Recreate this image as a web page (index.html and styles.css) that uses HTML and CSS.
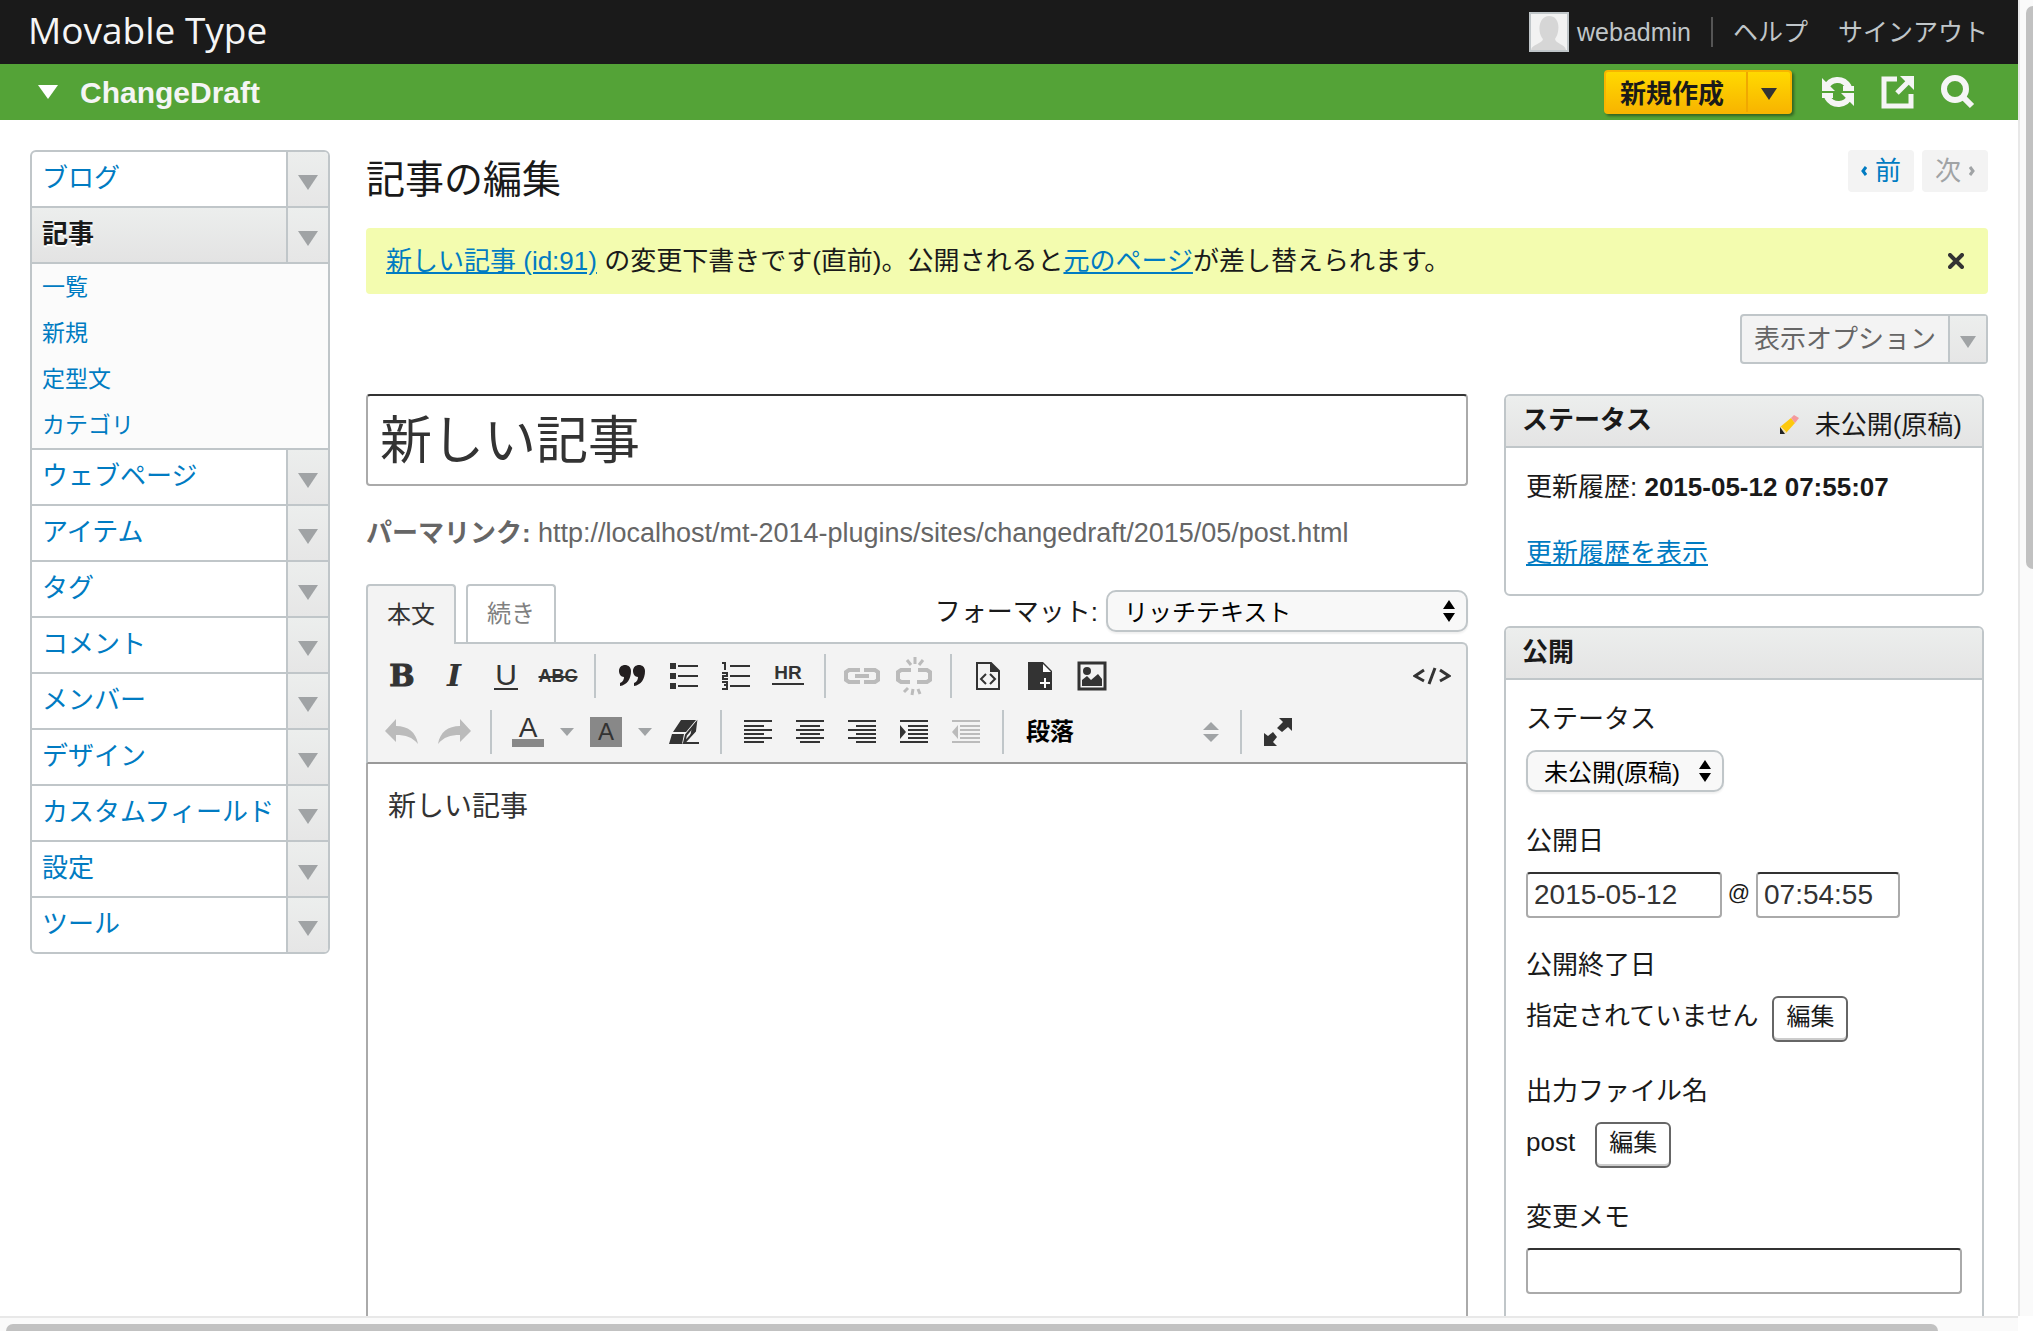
FILE: index.html
```html
<!DOCTYPE html>
<html lang="ja">
  <head>
    <meta charset="UTF-8" />
    <meta name="viewport" content="width=device-width, initial-scale=1.0" />
    <title>記事の編集 - ChangeDraft</title>
    <link rel="stylesheet" href="styles.css">
  </head>
  <body>
    <div class="page">
      <header class="header">
        <a href="#" class="brand">Movable Type</a>
        <div class="user-nav">
          <a href="#" class="user">
            <svg class="avatar" width="40" height="40" viewBox="0 0 40 40">
              <rect x="1" y="1" width="38" height="38" fill="#f2f2f2" stroke="#c0c6c9" stroke-width="2" />
              <path d="M2 38c1-6 11-6 12-11-5-5-6-22 6-23 12 0 11 17 6 23 1 5 10 5 11 11z" fill="#d6d6d6" />
            </svg>
            webadmin
          </a>
          <span class="divider"></span>
          <a href="#">ヘルプ</a>
          <a href="#" class="signout">サインアウト</a>
        </div>
      </header>

      <div class="blog-bar">
        <button type="button" class="blog-select">
          <svg width="20" height="14" viewBox="0 0 20 14"><path d="M0 0h20L10 14z" fill="#fff" /></svg>
          <span>ChangeDraft</span>
        </button>
        <div class="blog-tools">
          <div class="create">
            <button type="button" class="create-main">新規作成</button>
            <button type="button" class="create-more" aria-label="新規作成">
              <svg width="16" height="12" viewBox="0 0 16 12"><path d="M0 0h16L8 12z" fill="#333" /></svg>
            </button>
          </div>
          <a href="#" class="tool">
            <svg width="34" height="34" viewBox="0 0 34 34">
              <path d="M5 13C9 3 22 2 28 12M29 21C25 31 12 32 6 22" fill="none" stroke="#f5f5f5" stroke-width="6" />
              <path d="M1 3v13h13zM33 31V18H20zM22 11h11v5H22zM12 23H1v-5h11z" fill="#f5f5f5" />
            </svg>
          </a>
          <a href="#" class="tool">
            <svg width="34" height="34" viewBox="0 0 34 34">
              <path d="M16 4H3v27h27V19" fill="none" stroke="#f5f5f5" stroke-width="5" />
              <path d="M16 18L28 6" stroke="#f5f5f5" stroke-width="5" />
              <path d="M19 1h14v14z" fill="#f5f5f5" />
            </svg>
          </a>
          <a href="#" class="tool">
            <svg width="34" height="34" viewBox="0 0 34 34">
              <circle cx="14" cy="14" r="11" fill="none" stroke="#f5f5f5" stroke-width="6" />
              <path d="M21 21l10 10" stroke="#f5f5f5" stroke-width="6" />
            </svg>
          </a>
        </div>
      </div>

      <div class="content">
        <nav class="menu">
          <ul>
            <li><a href="#">ブログ</a><button type="button" aria-label="ブログ"></button></li>
            <li class="current"><a href="#">記事</a><button type="button" aria-label="記事"></button></li>
            <li class="submenu">
              <a href="#">一覧</a>
              <a href="#">新規</a>
              <a href="#">定型文</a>
              <a href="#">カテゴリ</a>
            </li>
            <li><a href="#">ウェブページ</a><button type="button" aria-label="ウェブページ"></button></li>
            <li><a href="#">アイテム</a><button type="button" aria-label="アイテム"></button></li>
            <li><a href="#">タグ</a><button type="button" aria-label="タグ"></button></li>
            <li><a href="#">コメント</a><button type="button" aria-label="コメント"></button></li>
            <li><a href="#">メンバー</a><button type="button" aria-label="メンバー"></button></li>
            <li><a href="#">デザイン</a><button type="button" aria-label="デザイン"></button></li>
            <li><a href="#">カスタムフィールド</a><button type="button" aria-label="カスタムフィールド"></button></li>
            <li><a href="#">設定</a><button type="button" aria-label="設定"></button></li>
            <li><a href="#">ツール</a><button type="button" aria-label="ツール"></button></li>
          </ul>
        </nav>

        <main class="main">
          <div class="title-row">
            <h1>記事の編集</h1>
            <div class="pager">
              <a href="#"><svg width="6" height="10" viewBox="0 0 6 10"><path d="M5 1L2 5l3 4" fill="none" stroke="currentColor" stroke-width="3" /></svg>前</a>
              <span>次<svg width="6" height="10" viewBox="0 0 6 10"><path d="M1 1l3 4-3 4" fill="none" stroke="currentColor" stroke-width="3" /></svg></span>
            </div>
          </div>

          <div class="notice">
            <p><a href="#">新しい記事 (id:91)</a> の変更下書きです(直前)。公開されると<a href="#">元のページ</a>が差し替えられます。</p>
            <button type="button" class="close" aria-label="閉じる">
              <svg width="16" height="16" viewBox="0 0 16 16"><path d="M2 2l12 12M14 2L2 14" stroke="#333" stroke-width="4" stroke-linecap="round" /></svg>
            </button>
          </div>

          <div class="options">
            <button type="button" class="options-main">表示オプション</button>
            <button type="button" class="options-more" aria-label="表示オプション">
              <svg width="16" height="12" viewBox="0 0 16 12"><path d="M0 0h16L8 12z" fill="#a0a3a5" /></svg>
            </button>
          </div>

          <div class="columns">
            <section class="editor">
              <input type="text" class="text-input entry-title" value="新しい記事" aria-label="タイトル" />
              <p class="permalink"><b>パーマリンク:</b> <span>http://localhost/mt-2014-plugins/sites/changedraft/2015/05/post.html</span></p>

              <div class="tab-row">
                <button type="button" class="tab active">本文</button>
                <button type="button" class="tab">続き</button>
                <div class="format">
                  <label for="format">フォーマット:</label>
                  <div class="select">
                    <select id="format"><option>リッチテキスト</option></select>
                    <svg width="12" height="22" viewBox="0 0 12 22"><path d="M0 9l6-9 6 9zM0 13h12l-6 9z" /></svg>
                  </div>
                </div>
              </div>

              <div class="toolbar">
                <div class="tools">
                  <button type="button" class="slab bold">B</button>
                  <button type="button" class="slab italic">I</button>
                  <button type="button" class="underline"><span>U</span></button>
                  <button type="button" class="strike"><span>ABC</span></button>
                  <i class="sep"></i>
                  <button type="button">
                    <svg width="28" height="24" viewBox="0 0 28 24"><path d="M13 7c0 8-4 14-11 15v-3c3-1 4-4 4-6C3 13 1 10 1 7c0-8 12-8 12 0zM27 7c0 8-4 14-11 15v-3c3-1 4-4 4-6-3 0-5-3-5-6 0-8 12-8 12 0z" fill="#231f20" /></svg>
                  </button>
                  <button type="button">
                    <svg width="30" height="28" viewBox="0 0 30 28"><path d="M1 1h6v6H1zM1 11h6v6H1zM1 21h6v6H1zM9 3h20v2H9zM9 13h20v2H9zM9 23h20v2H9z" fill="#333" /></svg>
                  </button>
                  <button type="button">
                    <svg width="30" height="28" viewBox="0 0 30 28">
                      <path d="M9 3h20v2H9zM9 13h20v2H9zM9 23h20v2H9z" fill="#333" />
                      <path d="M1 1h3v7M1 11h5v3H2v3h5M1 20h5v7H1M3 23h3" fill="none" stroke="#333" stroke-width="2" />
                    </svg>
                  </button>
                  <button type="button" class="rule"><span>HR</span></button>
                  <i class="sep"></i>
                  <button type="button" class="off">
                    <svg width="36" height="20" viewBox="0 0 36 20"><path d="M16 4H5L2 6v8l3 2h11M20 4h11l3 2v8l-3 2H20M11 10h14" fill="none" stroke="#bbb" stroke-width="4" /></svg>
                  </button>
                  <button type="button" class="off">
                    <svg width="36" height="40" viewBox="0 0 36 40">
                      <path d="M15 14H5l-3 2v8l3 2h9M22 14h9l3 2v8l-3 2H21" fill="none" stroke="#bbb" stroke-width="4" />
                      <path d="M11 4l4 5M19 1v7M27 4l-4 5M8 36l4-4M16 39l1-6M24 38l-2-5" stroke="#bbb" stroke-width="3" />
                    </svg>
                  </button>
                  <i class="sep"></i>
                  <button type="button">
                    <svg width="26" height="30" viewBox="0 0 26 30">
                      <path d="M2 2h14l8 8v18H2z" fill="none" stroke="#333" stroke-width="2" />
                      <path d="M15 1l10 10H15z" fill="#333" />
                      <path d="M11 13l-5 5 5 5M15 13l5 5-5 5" fill="none" stroke="#333" stroke-width="2" />
                    </svg>
                  </button>
                  <button type="button">
                    <svg width="26" height="30" viewBox="0 0 26 30">
                      <path d="M1 1h15l9 9v19H1z" fill="#333" />
                      <path d="M16 3v8h8z" fill="#fff" />
                      <path d="M18 17v10M13 22h10" stroke="#fff" stroke-width="2" />
                    </svg>
                  </button>
                  <button type="button">
                    <svg width="30" height="30" viewBox="0 0 30 30">
                      <path d="M2 2h26v26H2z" fill="none" stroke="#333" stroke-width="3" />
                      <circle cx="10" cy="10" r="4" fill="#333" />
                      <path d="M5 25v-6l5-4 4 4 7-6 4 5v7z" fill="#333" />
                    </svg>
                  </button>
                  <button type="button" class="source">
                    <svg width="38" height="18" viewBox="0 0 38 18"><path d="M11 3L2 9l9 5M27 3l9 6-9 5M22 1l-6 16" fill="none" stroke="#333" stroke-width="3" /></svg>
                  </button>
                </div>

                <div class="tools">
                  <button type="button" class="off">
                    <svg width="34" height="28" viewBox="0 0 34 28"><path d="M0 13L11 1v7c12 0 20 6 22 18C27 19 21 17 11 17v7z" fill="#bbb" /></svg>
                  </button>
                  <button type="button" class="off">
                    <svg width="34" height="28" viewBox="0 0 34 28"><path d="M34 13L23 1v7C11 8 3 14 1 26c6-7 12-9 22-9v7z" fill="#bbb" /></svg>
                  </button>
                  <i class="sep"></i>
                  <button type="button" class="forecolor"><span>A</span></button>
                  <button type="button" class="more"><svg width="14" height="8" viewBox="0 0 14 8"><path d="M0 0h14L7 8z" fill="#a0a3a5" /></svg></button>
                  <button type="button" class="backcolor"><span>A</span></button>
                  <button type="button" class="more"><svg width="14" height="8" viewBox="0 0 14 8"><path d="M0 0h14L7 8z" fill="#a0a3a5" /></svg></button>
                  <button type="button">
                    <svg width="32" height="26" viewBox="0 0 32 26">
                      <path d="M13 1h15L18 13H5zM4 15h12l-2 10H1z" fill="#333" />
                      <path d="M18 16L28 4l-1 8-11 12z" fill="none" stroke="#333" stroke-width="2" />
                      <path d="M24 8l4-5v8l-6 7z" fill="#333" />
                      <path d="M16 23h15v2H14z" fill="#333" />
                    </svg>
                  </button>
                  <i class="sep"></i>
                  <button type="button">
                    <svg width="28" height="24" viewBox="0 0 28 24"><path d="M0 1h28M0 6h20M0 10h28M0 14h20M0 18h28M0 22h20" stroke="#333" stroke-width="2" /></svg>
                  </button>
                  <button type="button">
                    <svg width="28" height="24" viewBox="0 0 28 24"><path d="M0 1h28M4 6h20M0 10h28M4 14h20M0 18h28M4 22h20" stroke="#333" stroke-width="2" /></svg>
                  </button>
                  <button type="button">
                    <svg width="28" height="24" viewBox="0 0 28 24"><path d="M0 1h28M8 6h20M0 10h28M8 14h20M0 18h28M8 22h20" stroke="#333" stroke-width="2" /></svg>
                  </button>
                  <button type="button">
                    <svg width="28" height="24" viewBox="0 0 28 24"><path d="M0 1h28M8 6h20M8 10h20M8 14h20M8 18h20M0 22h28" stroke="#333" stroke-width="2" /><path d="M0 5l6 7-6 7z" fill="#333" /></svg>
                  </button>
                  <button type="button" class="off">
                    <svg width="28" height="24" viewBox="0 0 28 24"><path d="M0 1h28M8 6h20M8 10h20M8 14h20M8 18h20M0 22h28" stroke="#bbb" stroke-width="2" /><path d="M6 5l-6 7 6 7z" fill="#bbb" /></svg>
                  </button>
                  <i class="sep"></i>
                  <div class="block-select">
                    <select aria-label="段落"><option>段落</option></select>
                    <svg width="16" height="20" viewBox="0 0 16 20"><path d="M0 8l8-8 8 8zM0 12h16l-8 8z" fill="#a0a3a5" /></svg>
                  </div>
                  <i class="sep"></i>
                  <button type="button">
                    <svg width="30" height="30" viewBox="0 0 30 30"><path d="M16 1h13v13l-4-4-6 5-5-4 6-6zM1 29V16l4 3 5-4 4 5-4 5 4 4z" fill="#333" /></svg>
                  </button>
                </div>
              </div>

              <div class="editor-body" contenteditable="true">新しい記事</div>
            </section>

            <aside class="widgets">
              <section class="widget">
                <div class="widget-head">
                  <h2>ステータス</h2>
                  <span class="draft">
                    <svg width="20" height="20" viewBox="0 0 20 20">
                      <path d="M1 12L12 3l4 5L7 18z" fill="#fdc90c" />
                      <path d="M1 12l6 6" stroke="#f0e0b0" stroke-width="2" />
                      <path d="M1 12v7h5z" fill="#222" />
                      <path d="M12 3l3-3 5 3-4 5z" fill="#f49a9c" />
                    </svg>
                    未公開(原稿)
                  </span>
                </div>
                <div class="widget-body">
                  <p>更新履歴: <b>2015-05-12 07:55:07</b></p>
                  <p class="history"><a href="#">更新履歴を表示</a></p>
                </div>
              </section>

              <section class="widget">
                <div class="widget-head">
                  <h2>公開</h2>
                </div>
                <div class="widget-body publish">
                  <div class="field">
                    <label for="status">ステータス</label>
                    <div class="select status">
                      <select id="status"><option>未公開(原稿)</option></select>
                      <svg width="12" height="22" viewBox="0 0 12 22"><path d="M0 9l6-9 6 9zM0 13h12l-6 9z" /></svg>
                    </div>
                  </div>
                  <div class="field date-field">
                    <label for="date">公開日</label>
                    <div class="field-row">
                      <input type="text" id="date" class="text-input date" value="2015-05-12" />
                      <span class="at">@</span>
                      <input type="text" class="text-input time" value="07:54:55" aria-label="公開日" />
                    </div>
                  </div>
                  <div class="field">
                    <span class="label">公開終了日</span>
                    <div class="field-row edit-row">
                      <span>指定されていません</span>
                      <button type="button" class="edit">編集</button>
                    </div>
                  </div>
                  <div class="field">
                    <span class="label">出力ファイル名</span>
                    <div class="field-row edit-row basename">
                      <span>post</span>
                      <button type="button" class="edit">編集</button>
                    </div>
                  </div>
                  <div class="field">
                    <label for="memo">変更メモ</label>
                    <input type="text" id="memo" class="text-input memo" />
                  </div>
                </div>
              </section>
            </aside>
          </div>
        </main>
      </div>
    </div>

    <div class="scroll-y"><span></span></div>
    <div class="scroll-x"><span></span></div>
  </body>
</html>
```
FILE: styles.css
```css
* {
  margin: 0;
  padding: 0;
  box-sizing: border-box;
}

body {
  display: grid;
  grid-template-columns: minmax(0, 1fr) 15px;
  grid-template-rows: minmax(0, 1fr) 15px;
  height: 100vh;
  overflow: hidden;
  background: #fff;
  font-family: "Liberation Sans", "Noto Sans CJK JP", sans-serif;
  font-size: 26px;
  line-height: 38px;
  color: #1a1a1a;
}

a {
  color: #007bc2;
}

button,
input,
select {
  font: inherit;
  color: inherit;
}

button {
  display: flex;
  align-items: center;
  justify-content: center;
  border: none;
  background: none;
  cursor: pointer;
}

svg {
  display: block;
  flex-shrink: 0;
}

.page {
  display: flex;
  flex-direction: column;
  overflow: hidden;
}

/* Header */
.header {
  display: flex;
  flex-shrink: 0;
  justify-content: space-between;
  align-items: center;
  height: 64px;
  padding: 0 30px 0 28px;
  background: #1a1a1a;
}

.header a {
  color: #c0c6c9;
  text-decoration: none;
}

.header .brand {
  padding-bottom: 4px;
  font-family: "Open Sans", sans-serif;
  font-size: 37px;
  color: #f5f5f5;
}

.user-nav {
  display: flex;
  align-items: center;
  font-size: 25px;
}

.user {
  display: flex;
  align-items: center;
  gap: 8px;
}

.divider {
  width: 2px;
  height: 30px;
  margin: 0 20px;
  background: #555;
}

.signout {
  margin-left: 30px;
}

/* Blog bar */
.blog-bar {
  display: flex;
  flex-shrink: 0;
  justify-content: space-between;
  align-items: center;
  height: 56px;
  padding: 0 43px 0 38px;
  background: #54a337;
}

.blog-select {
  gap: 22px;
  font-size: 30px;
  font-weight: bold;
  color: #f5f5f5;
}

.blog-select span {
  padding-top: 2px;
}

.blog-tools {
  display: flex;
  align-items: center;
}

.create {
  display: flex;
  height: 44px;
  margin-right: 3px;
  border: 2px solid #f8b500;
  border-radius: 4px;
  background: linear-gradient(#ffd900, #f8b500);
  box-shadow: 2px 2px 3px rgba(0, 0, 0, 0.4);
}

.create-main {
  width: 142px;
  padding: 4px 8px 0 0;
  border-right: 2px solid #f0a800;
  font-weight: bold;
}

.create-more {
  width: 42px;
  padding-top: 4px;
}

.tool {
  margin-left: 26px;
}

/* Menu */
.content {
  display: flex;
  gap: 36px;
  padding: 30px 30px 0;
}

.menu {
  flex: 0 0 300px;
}

.menu ul {
  border: 2px solid #c0c6c9;
  border-radius: 6px;
  overflow: hidden;
  list-style: none;
}

.menu li {
  display: flex;
  border-bottom: 2px solid #c0c6c9;
}

.menu li:last-child {
  border-bottom: none;
}

.menu a {
  flex: 1;
  height: 54px;
  padding-left: 10px;
  line-height: 52px;
  text-decoration: none;
  white-space: nowrap;
}

.menu button {
  width: 42px;
  border-left: 2px solid #c0c6c9;
  background: linear-gradient(#eceeed, #e6e6e6);
}

.menu button::before {
  content: "";
  margin-top: 6px;
  border: 10px solid transparent;
  border-top: 15px solid #a0a3a5;
  border-bottom: none;
}

.menu .current a {
  background: linear-gradient(#eceeed, #e3e3e3);
  font-weight: bold;
  color: #1a1a1a;
  text-shadow: 0 2px 0 #fff;
}

.menu .submenu {
  flex-direction: column;
  background: #fbfbfb;
}

.submenu a {
  flex: none;
  height: 46px;
  font-size: 23px;
  line-height: 46px;
}

/* Main */
.main {
  flex: 1;
  min-width: 0;
}

.title-row {
  display: flex;
  justify-content: space-between;
  margin-bottom: 20px;
}

h1 {
  height: 58px;
  font-size: 39px;
  font-weight: normal;
  line-height: 60px;
}

.pager {
  display: flex;
  gap: 8px;
}

.pager a,
.pager span {
  display: flex;
  align-items: center;
  justify-content: center;
  gap: 8px;
  width: 66px;
  height: 42px;
  border-radius: 4px;
  background: #f3f3f3;
  text-decoration: none;
}

.pager span {
  color: #a0a3a5;
}

.notice {
  display: flex;
  justify-content: space-between;
  align-items: center;
  height: 66px;
  margin-bottom: 20px;
  padding: 0 24px 0 20px;
  border-radius: 4px;
  background: #f3fcaf;
}

.options {
  display: flex;
  width: 248px;
  height: 50px;
  margin: 0 0 30px auto;
  border: 2px solid #c0c6c9;
  border-radius: 4px;
  background: #f3f3f3;
}

.options-main {
  flex: 1;
  color: #666;
}

.options-more {
  width: 38px;
  padding-top: 6px;
  border-left: 2px solid #c0c6c9;
  background: linear-gradient(#eceeed, #e6e6e6);
}

.columns {
  display: grid;
  grid-template-columns: minmax(0, 1fr) 480px;
  gap: 36px;
  padding-right: 4px;
}

/* Form parts */
.text-input {
  height: 46px;
  padding: 0 6px;
  border: 2px solid #aaa;
  border-top-color: #333;
  border-radius: 4px;
  background: #fff;
  font-size: 28px;
  color: #333;
}

.select {
  position: relative;
}

.select select {
  width: 100%;
  height: 42px;
  padding: 2px 0 0 16px;
  border: 2px solid #c0c6c9;
  border-radius: 10px;
  background: #f8f8f8;
  box-shadow: 0 2px 2px rgba(0, 0, 0, 0.06);
  appearance: none;
  font-size: 24px;
  color: #000;
}

.select svg {
  position: absolute;
  top: 10px;
  right: 13px;
  pointer-events: none;
}

/* Editor */
.entry-title {
  display: block;
  width: 100%;
  height: 92px;
  padding: 0 12px 8px;
  font-size: 52px;
}

.permalink {
  margin: 28px 0 32px;
  color: #666;
}

.permalink span {
  font-size: 27px;
}

.tab-row {
  display: flex;
  gap: 10px;
}

.tab {
  width: 90px;
  height: 58px;
  border: 2px solid #c0c6c9;
  border-bottom: none;
  border-radius: 4px 4px 0 0;
  font-size: 24px;
  color: #808080;
}

.tab.active {
  position: relative;
  height: 60px;
  margin-bottom: -2px;
  background: #f3f3f3;
  color: #333;
}

.format {
  display: flex;
  align-items: center;
  gap: 8px;
  height: 42px;
  margin: 6px 0 0 auto;
}

.format label {
  padding-top: 2px;
}

.format .select {
  width: 362px;
}

.toolbar {
  display: flex;
  flex-direction: column;
  gap: 12px;
  padding: 10px 8px 8px;
  border: 2px solid #c0c6c9;
  border-bottom: 2px solid #999;
  border-radius: 0 6px 0 0;
  background: #f3f3f3;
}

.tools {
  display: flex;
  height: 44px;
}

.tools button {
  width: 52px;
  color: #333;
}

.sep {
  width: 2px;
  margin: 0 10px;
  background: #c0c6c9;
}

.tools .slab {
  font-family: "DejaVu Serif", serif;
  font-size: 30px;
  font-weight: bold;
}

.tools .bold {
  -webkit-text-stroke: 1px #333;
}

.tools .italic {
  font-style: italic;
}

.underline span {
  width: 24px;
  border-bottom: 2px solid #333;
  font-size: 30px;
  line-height: 26px;
}

.strike span {
  font-size: 18px;
  font-weight: bold;
  text-decoration: line-through;
  text-decoration-thickness: 2px;
}

.rule span {
  width: 32px;
  margin-bottom: 4px;
  border-bottom: 2px solid #333;
  font-size: 19px;
  font-weight: bold;
  line-height: 20px;
}

.tools .source {
  margin-left: auto;
}

.tools .more {
  width: 26px;
}

.forecolor span {
  width: 32px;
  border-bottom: 8px solid #888;
  font-size: 28px;
  line-height: 22px;
}

.backcolor span {
  width: 32px;
  background: #888;
  font-size: 24px;
  line-height: 30px;
}

.block-select {
  position: relative;
  width: 216px;
}

.block-select select {
  width: 100%;
  height: 44px;
  padding-left: 12px;
  border: none;
  background: none;
  appearance: none;
  font-size: 24px;
  font-weight: bold;
  color: #000;
}

.block-select svg {
  position: absolute;
  top: 12px;
  right: 11px;
  pointer-events: none;
}

.editor-body {
  min-height: 640px;
  padding: 24px 20px;
  border: 2px solid #aaa;
  border-top: none;
  font-size: 28px;
  color: #333;
}

/* Widgets */
.widgets {
  display: flex;
  flex-direction: column;
  gap: 30px;
}

.widget {
  border: 2px solid #c0c6c9;
  border-radius: 6px;
}

.widget-head {
  display: flex;
  justify-content: space-between;
  height: 52px;
  padding: 5px 20px 0 16px;
  border-bottom: 2px solid #c0c6c9;
  border-radius: 4px 4px 0 0;
  background: linear-gradient(#eceeed, #e4e4e4);
}

h2 {
  font-size: 26px;
}

.draft {
  display: flex;
  align-items: center;
  gap: 16px;
  padding-top: 2px;
}

.widget-body {
  padding: 20px;
}

.history {
  margin: 28px 0 2px;
}

.publish {
  min-height: 680px;
}

.field {
  margin-bottom: 30px;
}

.date-field {
  margin-bottom: 28px;
}

.field label,
.field .label {
  display: block;
  margin-bottom: 12px;
}

.status {
  width: 198px;
}

.field-row {
  display: flex;
  align-items: center;
}

.date {
  width: 196px;
}

.at {
  width: 34px;
  padding-bottom: 4px;
  font-size: 22px;
  text-align: center;
}

.time {
  width: 144px;
}

.edit-row {
  gap: 14px;
}

.edit-row span {
  padding-bottom: 6px;
}

.basename {
  gap: 20px;
}

.edit {
  width: 76px;
  height: 46px;
  padding-bottom: 4px;
  border: 2px solid #666;
  border-radius: 6px;
  box-shadow: inset 0 -2px 0 #ccc;
  font-size: 24px;
}

.memo {
  display: block;
  width: 100%;
}

/* Scrollbars */
.scroll-y {
  padding: 6px 0 0 6px;
  border-left: 2px solid #e8e8e8;
  background: #fafafa;
}

.scroll-y span {
  display: block;
  height: 43%;
  border-radius: 7px 0 0 7px;
  background: #c1c1c1;
}

.scroll-x {
  padding: 6px 0 0 6px;
  border-top: 2px solid #e8e8e8;
  background: #fafafa;
}

.scroll-x span {
  display: block;
  width: 96%;
  height: 7px;
  border-radius: 7px 7px 0 0;
  background: #c1c1c1;
}
```
